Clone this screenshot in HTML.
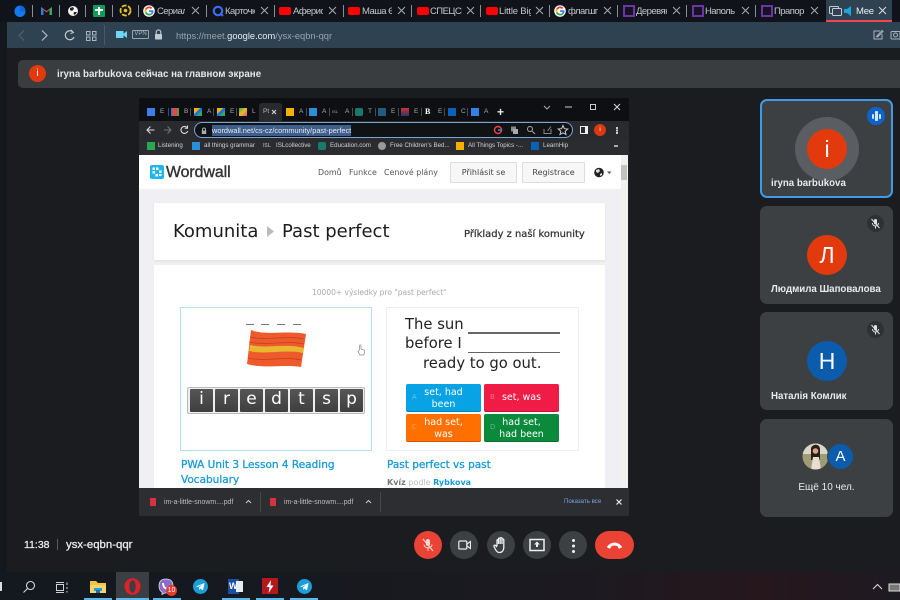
<!DOCTYPE html>
<html><head><meta charset="utf-8">
<style>
*{box-sizing:border-box}
html,body{margin:0;padding:0}
body{width:900px;height:600px;overflow:hidden;position:relative;background:#1a1c20;font-family:"Liberation Sans","Noto Sans CJK SC",sans-serif;color:#fff;filter:blur(.3px)}
.a{position:absolute;white-space:nowrap}
.sep{position:absolute;top:5px;width:1px;height:12px;background:#8a8d92}
.tt{position:absolute;top:4.500px;font-size:9.500px;letter-spacing:-.55px;line-height:13px;color:#c4c7cc;white-space:nowrap;overflow:hidden}
.x{position:absolute;top:6px;width:9px;height:9px}
.tile{position:absolute;left:760px;width:133px;background:#3c4043;border-radius:7px}
.av{position:absolute;width:40px;height:40px;border-radius:50%;color:#fff;text-align:center;font-size:23px;line-height:40px}
.nm{position:absolute;left:771px;font-size:9.700px;line-height:14px;font-weight:bold;color:#e8eaed;white-space:nowrap}
.mut{position:absolute;left:867px;width:17px;height:17px;border-radius:50%;background:#2e3134}
.btn{position:absolute;top:531px;width:28px;height:28px;border-radius:50%;background:#3c4043}
.bt{position:absolute;top:105px;height:16px}
.bt i{position:absolute;left:0;top:3px;width:8px;height:8px;display:block}
.bt b{position:absolute;left:13px;top:3px;font:normal 6.500px/8px "Liberation Sans",sans-serif;color:#aaa}
.ts{position:absolute;top:108px;width:1px;height:8px;background:#4a4c50}
.bm{position:absolute;top:140px;font-size:6.200px;line-height:12px;color:#d0d2d4;white-space:nowrap}
.bi{position:absolute;top:142px;width:8px;height:8px}
.lt{position:absolute;top:389px;width:23px;height:23px;background:linear-gradient(#555,#3f3f3f);color:#fff;font-size:17px;line-height:21px;text-align:center;font-family:"DejaVu Sans",sans-serif;border-radius:1px}
.ans{position:absolute;width:75px;height:28px;border-radius:2px;color:#fff;font-size:9.500px;line-height:11.500px;text-align:center;padding-top:3px;font-family:"DejaVu Sans",sans-serif;box-shadow:inset 0 -1px rgba(0,0,0,.2)}
.ans u{position:absolute;left:6px;top:8px;text-decoration:none;font-size:7px;line-height:11px;opacity:.35}
.tb{position:absolute;top:598px;width:28px;height:2px;background:#5fb6e8}
.ln{font:10.500px/15px "DejaVu Sans",sans-serif;color:#1a9ad8;-webkit-text-stroke:.3px #1a9ad8}
.big{font:14.800px/19.500px "DejaVu Sans",sans-serif;color:#222}
</style></head><body>

<!-- top tab strip -->
<div class="a" style="left:0;top:0;width:900px;height:22px;background:#10131a"></div>
<svg class="a" style="left:14px;top:5px" width="12" height="12"><circle cx="6" cy="6" r="5.500" fill="#0a66e0"/><path d="M.5 6.500A5.500 5.500 0 0 0 11.500 6.500L6 6.500 6 1A5.500 5.500 0 0 0 .5 6.500Z" fill="#1479ea"/></svg>
<div class="sep" style="left:32px"></div>
<svg class="a" style="left:41px;top:6px" width="11" height="10"><path d="M0 1V9H2.500V4L5.500 6.500 8.500 4V9H11V1L5.500 5Z" fill="#e8483a"/><path d="M0 1 2.500 3V9H0Z" fill="#2a7ce0"/><path d="M11 1 8.500 3V9H11Z" fill="#2fae5b"/></svg>
<div class="sep" style="left:59px"></div>
<svg class="a" style="left:67px;top:5px" width="12" height="12"><circle cx="6" cy="6" r="5" fill="#f2f2f2"/><path d="M3 3 6 2 7 4 5 6 3 5ZM7 7 10 7 8 10 6.500 9Z" fill="#222"/></svg>
<div class="sep" style="left:85px"></div>
<div class="a" style="left:93px;top:5px;width:12px;height:12px;background:#0f9d58;border-radius:1px"></div>
<div class="a" style="left:98px;top:7px;width:1.500px;height:8px;background:#fff"></div>
<div class="a" style="left:95px;top:9px;width:8px;height:1.500px;background:#fff"></div>
<div class="sep" style="left:112px"></div>
<svg class="a" style="left:119px;top:4px" width="13" height="13"><circle cx="6.500" cy="6.500" r="5" fill="none" stroke="#e8c020" stroke-width="1.800" stroke-dasharray="5 1.500"/><circle cx="6.500" cy="6.500" r="1.800" fill="#e8c020"/></svg>
<div class="sep" style="left:138px"></div>

<svg class="a" style="left:143px;top:5px" width="12" height="12"><circle cx="6" cy="6" r="5.800" fill="#fff"/><path d="M6 3.200A2.800 2.800 0 0 1 8 4L9.300 2.700A4.600 4.600 0 0 0 2 4L3.500 5A2.800 2.800 0 0 1 6 3.200Z" fill="#ea4335"/><path d="M2 4A4.600 4.600 0 0 0 2 8L3.500 7A2.800 2.800 0 0 1 3.500 5Z" fill="#fbbc05"/><path d="M2 8A4.600 4.600 0 0 0 9.200 9.300L7.800 8.200A2.800 2.800 0 0 1 3.500 7Z" fill="#34a853"/><path d="M10.500 5.200H6V7H8.600A2.500 2.500 0 0 1 7.800 8.200L9.200 9.300A4.600 4.600 0 0 0 10.500 5.200Z" fill="#4285f4"/></svg>
<div class="tt" style="left:157px;width:28px">Сериал</div>
<svg class="x" style="left:191px"><path d="M1 1 8 8M8 1 1 8" stroke="#aaa" fill="none"/></svg>
<div class="sep" style="left:206px"></div>
<svg class="a" style="left:212px;top:5px" width="12" height="12"><circle cx="6" cy="6" r="4.200" fill="none" stroke="#3b6cf0" stroke-width="2.200"/><path d="M8 8 11 11" stroke="#3b6cf0" stroke-width="2"/></svg>
<div class="tt" style="left:225px;width:30px">Карточк</div>
<svg class="x" style="left:260px"><path d="M1 1 8 8M8 1 1 8" stroke="#aaa" fill="none"/></svg>
<div class="sep" style="left:274px"></div>
<div class="a" style="left:279px;top:7px;width:12px;height:8px;background:#f00;border-radius:2px"></div>
<div class="tt" style="left:293px;width:30px">Аферист</div>
<svg class="x" style="left:328px"><path d="M1 1 8 8M8 1 1 8" stroke="#aaa" fill="none"/></svg>
<div class="sep" style="left:343px"></div>
<div class="a" style="left:348px;top:7px;width:12px;height:8px;background:#f00;border-radius:2px"></div>
<div class="tt" style="left:362px;width:30px">Маша Є</div>
<svg class="x" style="left:397px"><path d="M1 1 8 8M8 1 1 8" stroke="#aaa" fill="none"/></svg>
<div class="sep" style="left:411px"></div>
<div class="a" style="left:417px;top:7px;width:12px;height:8px;background:#f00;border-radius:2px"></div>
<div class="tt" style="left:430px;width:32px">СПЕЦСЕ</div>
<svg class="x" style="left:466px"><path d="M1 1 8 8M8 1 1 8" stroke="#aaa" fill="none"/></svg>
<div class="sep" style="left:480px"></div>
<div class="a" style="left:486px;top:7px;width:12px;height:8px;background:#f00;border-radius:2px"></div>
<div class="tt" style="left:499px;width:32px;letter-spacing:-.2px">Little Big</div>
<svg class="x" style="left:535px"><path d="M1 1 8 8M8 1 1 8" stroke="#aaa" fill="none"/></svg>
<div class="sep" style="left:549px"></div>
<svg class="a" style="left:554px;top:5px" width="12" height="12"><circle cx="6" cy="6" r="5.800" fill="#fff"/><path d="M6 3.200A2.800 2.800 0 0 1 8 4L9.300 2.700A4.600 4.600 0 0 0 2 4L3.500 5A2.800 2.800 0 0 1 6 3.200Z" fill="#ea4335"/><path d="M2 4A4.600 4.600 0 0 0 2 8L3.500 7A2.800 2.800 0 0 1 3.500 5Z" fill="#fbbc05"/><path d="M2 8A4.600 4.600 0 0 0 9.200 9.300L7.800 8.200A2.800 2.800 0 0 1 3.500 7Z" fill="#34a853"/><path d="M10.500 5.200H6V7H8.600A2.500 2.500 0 0 1 7.800 8.200L9.200 9.300A4.600 4.600 0 0 0 10.500 5.200Z" fill="#4285f4"/></svg>
<div class="tt" style="left:568px;width:30px">флагшп</div>
<svg class="x" style="left:603px"><path d="M1 1 8 8M8 1 1 8" stroke="#aaa" fill="none"/></svg>
<div class="sep" style="left:617px"></div>
<div class="a" style="left:623px;top:5px;width:12px;height:12px;border:2.500px solid #6b35a5;background:#15131f"></div>
<div class="tt" style="left:636px;width:31px">Деревян</div>
<svg class="x" style="left:672px"><path d="M1 1 8 8M8 1 1 8" stroke="#aaa" fill="none"/></svg>
<div class="sep" style="left:686px"></div>
<div class="a" style="left:692px;top:5px;width:12px;height:12px;border:2.500px solid #6b35a5;background:#15131f"></div>
<div class="tt" style="left:705px;width:31px">Наполь</div>
<svg class="x" style="left:741px"><path d="M1 1 8 8M8 1 1 8" stroke="#aaa" fill="none"/></svg>
<div class="sep" style="left:755px"></div>
<div class="a" style="left:761px;top:5px;width:12px;height:12px;border:2.500px solid #6b35a5;background:#15131f"></div>
<div class="tt" style="left:774px;width:31px">Прапор</div>
<svg class="x" style="left:810px"><path d="M1 1 8 8M8 1 1 8" stroke="#aaa" fill="none"/></svg>
<div class="a" style="left:826px;top:0;width:66px;height:22px;background:#2f4251"></div>
<div class="a" style="left:826px;top:20px;width:66px;height:1.500px;background:#f0474b"></div>
<svg class="a" style="left:829px;top:6px" width="13" height="10"><rect x=".5" y=".5" width="9" height="7" rx="1" fill="none" stroke="#c8ccd0"/><rect x="3.500" y="2.500" width="9" height="7" rx="1" fill="#2f4251" stroke="#c8ccd0"/></svg>
<svg class="a" style="left:844px;top:6px" width="9" height="10"><path d="M0 3H3L7 0V10L3 7H0Z" fill="#1aa6e0"/></svg>
<div class="tt" style="left:856px;width:18px;color:#eee;letter-spacing:-.2px">Meet</div>
<svg class="x" style="left:878px"><path d="M1 1 8 8M8 1 1 8" stroke="#ddd" fill="none"/></svg>

<!-- address bar -->
<div class="a" style="left:7px;top:22px;width:893px;height:26px;background:#2f4251"></div>
<svg class="a" style="left:17px;top:29px" width="100" height="13" fill="none"><path d="M7 1.500 2 6.500 7 11.500" stroke="#50626f" stroke-width="1.200"/><path d="M25 1.500 30 6.500 25 11.500" stroke="#b5bec6" stroke-width="1.200"/><path d="M56 3A4.500 4.500 0 1 0 57 8" stroke="#c2c9cf" stroke-width="1.200"/><path d="M54 .8 56.500 3.500 53.500 4.500" stroke="#c2c9cf"/><g stroke="#aeb6bd"><rect x="69.500" y="2.500" width="3.500" height="3.500"/><rect x="75.500" y="2.500" width="3.500" height="3.500"/><rect x="69.500" y="8" width="3.500" height="3.500"/><rect x="75.500" y="8" width="3.500" height="3.500"/></g></svg>
<div class="a" style="left:104px;top:25px;width:1px;height:20px;background:#4a5b68"></div>
<svg class="a" style="left:116px;top:30px" width="11" height="9"><rect y="1" width="7.500" height="7" fill="#6fd6f5"/><path d="M7 4 11 1V8L7 5Z" fill="#6fd6f5"/></svg>
<div class="a" style="left:132px;top:30px;width:17px;height:9px;border:1px solid #9aa4ac;border-radius:1px;font-size:6px;line-height:7px;text-align:center;color:#a8b1b8">VPN</div>
<svg class="a" style="left:154px;top:29px" width="9" height="11"><path d="M2.200 5V3.200A2.300 2.300 0 0 1 6.800 3.200V5" fill="none" stroke="#c2c9cf" stroke-width="1.100"/><rect x="1" y="5" width="7" height="5.500" rx=".6" fill="#c2c9cf"/></svg>
<div class="a" style="left:176px;top:29.500px;font-size:9.300px;line-height:13px;color:#99a4ad">https://meet.<span style="color:#e8ecef">google.com</span>/ysx-eqbn-qqr</div>
<svg class="a" style="left:872px;top:29px" width="28" height="11" fill="none" stroke="#a9b2b9"><path d="M8 2H2V10H10V5"/><path d="M4.500 7.500 10 1.500 11 2.500 5.500 8Z"/><rect x="19" y="2.500" width="9" height="7.500" rx="1"/><circle cx="23.500" cy="6" r="2"/></svg>

<!-- left strip -->
<div class="a" style="left:0;top:22px;width:7px;height:550px;background:#14171c"></div>

<!-- banner -->
<div class="a" style="left:18px;top:60px;width:882px;height:28px;background:#3a3d40;border-radius:5px 0 0 5px"></div>
<div class="a" style="left:29px;top:65px;width:17px;height:17px;border-radius:50%;background:#e23a0c;font-size:10px;line-height:17px;text-align:center;color:#fff">i</div>
<div class="a" style="left:57px;top:67.500px;font-size:9.750px;line-height:14px;font-weight:bold;color:#e4e6e8">iryna barbukova сейчас на главном экране</div>

<!-- shared screen chrome -->
<div class="a" style="left:139px;top:98px;width:490px;height:418px;background:#202124;overflow:hidden"></div>
<div class="a" style="left:139px;top:98px;width:490px;height:23px;background:#0e0f12"></div>
<div class="a" style="left:259px;top:103px;width:23px;height:18px;background:#292a2d;border-radius:3px 3px 0 0"></div>
<div class="a" style="left:263px;top:108px;font-size:6.500px;line-height:8px;color:#bbb">Pt</div>
<svg class="a" style="left:271px;top:109px" width="6" height="6"><path d="M1 1 5 5M5 1 1 5" stroke="#ddd"/></svg>

<div class="bt" style="left:147px"><i style="background:#3a7ee8"></i><b>E</b></div>
<div class="ts" style="left:168px"></div>
<div class="bt" style="left:171px"><i style="background:linear-gradient(90deg,#2a7ce0 20%,#e8483a 20%,#e8483a 80%,#2fae5b 80%)"></i><b>B</b></div>
<div class="ts" style="left:190px"></div>
<div class="bt" style="left:194px"><i style="background:linear-gradient(135deg,#f4b400 40%,#1a73e8 40%,#1a73e8 65%,#34a853 65%)"></i><b>A</b></div>
<div class="ts" style="left:213px"></div>
<div class="bt" style="left:217px"><i style="background:linear-gradient(135deg,#f4b400 40%,#1a73e8 40%,#1a73e8 65%,#34a853 65%)"></i><b>E</b></div>
<div class="ts" style="left:236px"></div>
<div class="bt" style="left:239px"><i style="background:linear-gradient(135deg,#3ba55c,#e8c020 50%,#e84393)"></i><b>L</b></div>
<div class="bt" style="left:286px"><i style="background:#f4b000"></i><b>A</b></div>
<div class="ts" style="left:306px"></div>
<div class="bt" style="left:309px"><i style="background:#2a8fd8"></i><b>A</b></div>
<div class="ts" style="left:329px"></div>
<div class="bt" style="left:332px"><i style="background:#111;font:normal 4px/8px 'Liberation Sans';color:#aaa">ISL</i><b>A</b></div>
<div class="ts" style="left:352px"></div>
<div class="bt" style="left:355px"><i style="background:#177a6c;border-radius:2px"></i><b>T</b></div>
<div class="ts" style="left:375px"></div>
<div class="bt" style="left:378px"><i style="background:#1f5c7e"></i><b>E</b></div>
<div class="ts" style="left:398px"></div>
<div class="bt" style="left:401px"><i style="background:linear-gradient(#c33,#336)"></i><b>E</b></div>
<div class="ts" style="left:421px"></div>
<div class="bt" style="left:425px"><i style="background:#111;color:#fff;font:bold 8px/8px 'Liberation Serif'">B</i><b>E</b></div>
<div class="ts" style="left:444px"></div>
<div class="bt" style="left:448px"><i style="background:#0b62b5"></i><b>C</b></div>
<div class="ts" style="left:467px"></div>
<div class="bt" style="left:471px"><i style="background:#3a7ee8"></i><b>A</b></div>
<div class="a" style="left:497px;top:105px;font-size:12px;line-height:14px;font-weight:bold;color:#e8e8e8">+</div>
<svg class="a" style="left:541px;top:102px" width="82" height="11" fill="none" stroke="#aaa"><path d="M3 4 6 7 9 4"/><path d="M24 5H31" stroke="#ccc"/><rect x="49.500" y="2.500" width="5" height="5" stroke="#ccc"/><path d="M73 2 79 8M79 2 73 8" stroke="#ddd"/></svg>

<!-- chrome url -->
<div class="a" style="left:139px;top:121px;width:490px;height:20px;background:#292a2d"></div>
<svg class="a" style="left:146px;top:124px" width="46" height="12" fill="none"><path d="M1.500 6H8.500M4.500 2.500 1 6 4.500 9.500" stroke="#ddd" stroke-width="1.100"/><path d="M18 6H25M21.500 2.500 25 6 21.500 9.500" stroke="#707276" stroke-width="1.100"/><path d="M41 3.500A3.500 3.500 0 1 0 41.800 7" stroke="#ddd" stroke-width="1.100"/><path d="M41.500 1.500V4.200H38.800" stroke="#ddd"/></svg>
<div class="a" style="left:194px;top:122px;width:379px;height:16px;border:1.200px solid #7aa3d8;border-radius:8px;background:#111214"></div>
<svg class="a" style="left:201px;top:127px" width="6" height="8"><path d="M1.500 3.500V2.500A1.500 1.500 0 0 1 4.500 2.500V3.500" stroke="#aaa" fill="none"/><rect x=".8" y="3.500" width="4.400" height="3.500" fill="#aaa"/></svg>
<div class="a" style="left:212px;top:125px;width:139px;height:10.500px;background:#3e5e8c"></div>
<div class="a" style="left:212px;top:124.500px;font-size:7.400px;line-height:11px;color:#e8eaed">wordwall.net/cs-cz/community/past-perfect</div>
<svg class="a" style="left:493px;top:124px" width="78" height="12"><circle cx="5" cy="6" r="3.500" fill="none" stroke="#ea4335" stroke-width="1.500"/><path d="M5 6H8.500" stroke="#4285f4" stroke-width="1.500"/><rect x="18" y="2.500" width="5" height="5" fill="#888"/><rect x="20" y="5" width="5" height="5" fill="#aaa"/><circle cx="37" cy="5" r="2.500" fill="none" stroke="#aaa"/><path d="M39 7 42 10" stroke="#aaa"/><path d="M51 5V9.500H58V5M54.500 7 58 2.500" fill="none" stroke="#888"/><path d="M70 1.500 71.400 4.700 74.800 5 72.200 7.300 73 10.500 70 8.800 67 10.500 67.800 7.300 65.200 5 68.600 4.700Z" fill="none" stroke="#ccc"/></svg>
<div class="a" style="left:580px;top:126px;width:8px;height:8px;border:1px solid #eee;border-right-width:3px"></div>
<div class="a" style="left:594px;top:124px;width:12px;height:12px;border-radius:50%;background:#d93a10;font-size:6px;line-height:12px;text-align:center">i</div>
<div class="a" style="left:616px;top:127px;width:2px;height:2px;background:#ccc;box-shadow:0 2.500px #ccc,0 5px #ccc"></div>

<!-- bookmarks -->
<div class="a" style="left:139px;top:141px;width:490px;height:14px;background:#2a2c2f"></div>
<div class="bi" style="left:147px;background:#2aa84f"></div><div class="bm" style="left:158px">Listening</div>
<div class="bi" style="left:192px;background:#2a8fd8"></div><div class="bm" style="left:204px">all things grammar</div>
<div class="a" style="left:263px;top:140px;font-size:5px;line-height:12px;color:#999;font-weight:bold">ISL</div><div class="bm" style="left:276px">ISLcollective</div>
<div class="bi" style="left:318px;background:#177a6c;border-radius:2px"></div><div class="bm" style="left:330px">Education.com</div>
<div class="bi" style="left:378px;background:#999;border-radius:50%"></div><div class="bm" style="left:390px">Free Children's Bed...</div>
<div class="bi" style="left:456px;background:#f4b000"></div><div class="bm" style="left:468px">All Things Topics -...</div>
<div class="bi" style="left:531px;background:#0b62b5"></div><div class="bm" style="left:543px">LearnHip</div>
<div class="a" style="left:614px;top:145px;width:4px;height:2px;background:#aaa"></div>

<!-- page -->
<div class="a" style="left:139px;top:155px;width:482px;height:333px;background:#f0f0f4"></div>
<div class="a" style="left:139px;top:155px;width:482px;height:34px;background:#fff"></div>
<div class="a" style="left:621px;top:155px;width:7px;height:333px;background:#f1f1f1"></div>
<div class="a" style="left:621px;top:165px;width:6px;height:15px;background:#c1c1c1"></div>

<svg class="a" style="left:150px;top:165px" width="14" height="14"><rect width="14" height="14" rx="2" fill="#1fb6ee"/><g fill="#fff"><rect x="2.500" y="2.500" width="2.500" height="2.500"/><rect x="6" y="2.500" width="2.500" height="2.500"/><rect x="9" y="5.500" width="2.500" height="2.500"/><rect x="2.500" y="6" width="2.500" height="2.500"/><rect x="5.500" y="9" width="2.500" height="2.500"/><rect x="9" y="9" width="2.500" height="2"/></g></svg>
<div class="a" style="left:166px;top:163.500px;font-size:15.800px;line-height:18px;color:#333;-webkit-text-stroke:.4px #333">Wordwall</div>
<div class="a" style="left:318px;top:167px;font:7.900px/12px 'DejaVu Sans',sans-serif;color:#555">Domů</div>
<div class="a" style="left:349px;top:167px;font:7.900px/12px 'DejaVu Sans',sans-serif;color:#555">Funkce</div>
<div class="a" style="left:384px;top:167px;font:7.900px/12px 'DejaVu Sans',sans-serif;color:#555">Cenové plány</div>
<div class="a" style="left:450px;top:162px;width:67px;height:21px;background:#f7f7f7;border:1px solid #ddd;border-radius:1px;font:8px/19px 'DejaVu Sans',sans-serif;color:#444;text-align:center">Přihlásit se</div>
<div class="a" style="left:522px;top:162px;width:63px;height:21px;background:#f7f7f7;border:1px solid #ddd;border-radius:1px;font:8px/19px 'DejaVu Sans',sans-serif;color:#444;text-align:center">Registrace</div>
<svg class="a" style="left:594px;top:167px" width="20" height="11"><circle cx="5" cy="5.500" r="4.800" fill="#222"/><path d="M2 3 5 2 6 4 4 6 2 5ZM6 7 8 6 8 8 6 9Z" fill="#ddd"/><path d="M13 4.500H17.500L15.250 7Z" fill="#555"/></svg>

<div class="a" style="left:154px;top:203px;width:451px;height:57px;background:#fff;box-shadow:0 1px 2px #ddd"></div>
<div class="a" style="left:173px;top:220px;font:18px/24px 'DejaVu Sans',sans-serif;color:#1c1c1c">Komunita</div>
<svg class="a" style="left:267px;top:226px" width="7" height="11"><path d="M0 0 7 5.500 0 11Z" fill="#bbb"/></svg>
<div class="a" style="left:282px;top:220px;font:18px/24px 'DejaVu Sans',sans-serif;color:#1c1c1c">Past perfect</div>
<div class="a" style="left:464px;top:228px;font:9.950px/14px 'DejaVu Sans',sans-serif;color:#333;-webkit-text-stroke:.25px #333">Příklady z naší komunity</div>

<div class="a" style="left:154px;top:265px;width:451px;height:223px;background:#fff"></div>
<div class="a" style="left:312px;top:287px;font:7.500px/12px 'DejaVu Sans',sans-serif;color:#aaa">10000+ výsledky pro "past perfect"</div>

<!-- card A -->
<div class="a" style="left:180px;top:307px;width:192px;height:144px;background:#fff;border:1px solid #b5e0f2"></div>
<div class="a" style="left:246px;top:324px;width:8px;height:1px;background:#777;box-shadow:15px 0 #777,31px 0 #777,47px 0 #777"></div>
<svg class="a" style="left:246px;top:328px" width="62" height="42"><path d="M5 2C20 8 42 2 60 6L55 39C38 36 18 41 1 36Z" fill="#ee5a2c"/><path d="M4 17C20 21 40 15 58 20L57 25C40 21 20 27 3 23Z" fill="#e8b830"/><path d="M4 9C20 13 40 7 58 11M3 14C20 18 40 12 58 16M2 30C20 34 38 28 55 32" stroke="#c8401e" fill="none" stroke-width=".8"/></svg>
<div class="a" style="left:187px;top:387px;width:178px;height:27px;background:#eee;border:1px solid #bbb;border-radius:2px"></div>
<div class="lt" style="left:190px">i</div><div class="lt" style="left:215px">r</div><div class="lt" style="left:240px">e</div><div class="lt" style="left:265px">d</div><div class="lt" style="left:290px">t</div><div class="lt" style="left:315px">s</div><div class="lt" style="left:340px">p</div>
<svg class="a" style="left:357px;top:344px" width="9" height="12"><path d="M2.500 6V1.800C2.500 .6 4 .6 4 1.800V5L7.500 6.200V9.500L6.500 11H3L1 7.500Z" fill="#fff" stroke="#888" stroke-width=".7"/></svg>

<!-- card B -->
<div class="a" style="left:386px;top:307px;width:193px;height:144px;background:#fff;border:1px solid #eee"></div>
<div class="a big" style="left:405px;top:314.500px">The sun</div>
<div class="a" style="left:468px;top:332px;width:92px;height:1.500px;background:#666"></div>
<div class="a big" style="left:405px;top:333.500px">before I</div>
<div class="a" style="left:468px;top:351.500px;width:92px;height:1.500px;background:#666"></div>
<div class="a big" style="left:423px;top:353.500px">ready to go out.</div>
<div class="ans" style="left:406px;top:384px;background:#07a3e4"><u>A</u>set, had<br>been</div>
<div class="ans" style="left:484px;top:384px;background:#f01c46;padding-top:8px"><u>B</u>set, was</div>
<div class="ans" style="left:406px;top:414px;background:#ff7000"><u>C</u>had set,<br>was</div>
<div class="ans" style="left:484px;top:414px;background:#0b8a3c"><u>D</u>had set,<br>had been</div>

<div class="a ln" style="left:181px;top:458px">PWA Unit 3 Lesson 4 Reading</div>
<div class="a ln" style="left:181px;top:473px">Vocabulary</div>
<div class="a ln" style="left:387px;top:458px">Past perfect vs past</div>
<div class="a" style="left:387px;top:477px;font:8px/12px 'DejaVu Sans',sans-serif;color:#777"><span style="font-weight:bold">Kvíz</span> <span style="color:#bbb">podle</span> <span style="color:#1a9ad8;font-weight:bold">Rybkova</span></div>

<!-- download bar -->
<div class="a" style="left:139px;top:488px;width:490px;height:28px;background:#2c2e31"></div>
<div class="a" style="left:150px;top:498px;width:6px;height:8px;background:#d8333c"></div>
<div class="a" style="left:164px;top:497.500px;font-size:6.900px;line-height:10px;color:#bcbfc2">im-a-little-snowm....pdf</div>
<svg class="a" style="left:245px;top:499px" width="7" height="5"><path d="M1 4 3.500 1.500 6 4" stroke="#ccc" fill="none"/></svg>
<div class="a" style="left:260px;top:492px;width:1px;height:20px;background:#45474a"></div>
<div class="a" style="left:270px;top:498px;width:6px;height:8px;background:#d8333c"></div>
<div class="a" style="left:284px;top:497.500px;font-size:6.900px;line-height:10px;color:#bcbfc2">im-a-little-snowm....pdf</div>
<svg class="a" style="left:365px;top:499px" width="7" height="5"><path d="M1 4 3.500 1.500 6 4" stroke="#ccc" fill="none"/></svg>
<div class="a" style="left:380px;top:492px;width:1px;height:20px;background:#45474a"></div>
<div class="a" style="left:564px;top:497px;font-size:6.100px;line-height:10px;color:#7ba4e0">Показать все</div>
<svg class="a" style="left:615px;top:498px" width="8" height="8"><path d="M1.500 1.500 6.500 6.500M6.500 1.500 1.500 6.500" stroke="#eee" stroke-width="1.200"/></svg>

<!-- right tiles -->
<div class="tile" style="top:99px;height:99px;border:2px solid #3f9be8"></div>
<div class="a" style="left:795px;top:116.500px;width:64px;height:64px;border-radius:50%;background:#5a5e62"></div>
<div class="av" style="left:807px;top:128.500px;background:#e23a0c">i</div>
<div class="nm" style="top:177px">iryna barbukova</div>
<div class="a" style="left:867px;top:107px;width:18px;height:18px;border-radius:50%;background:#0b63cf"></div>
<div class="a" style="left:871.500px;top:113.500px;width:2px;height:5px;background:#d8e8fb;border-radius:1px"></div>
<div class="a" style="left:875px;top:111px;width:2.500px;height:10px;background:#d8e8fb;border-radius:1px"></div>
<div class="a" style="left:879px;top:113.500px;width:2px;height:5px;background:#d8e8fb;border-radius:1px"></div>

<div class="tile" style="top:206px;height:98px"></div>
<div class="av" style="left:807px;top:235px;background:#e23a0c">Л</div>
<div class="nm" style="top:283px">Людмила Шаповалова</div>
<div class="mut" style="top:215px"></div>
<svg class="a" style="left:870px;top:218px" width="11" height="11" fill="none" stroke="#dfe1e3"><rect x="4" y="1" width="3" height="5.500" rx="1.500" fill="#dfe1e3" stroke="none"/><path d="M2.500 5C2.500 9 8.500 9 8.500 5M5.500 8V10.500"/><path d="M1.500 1 9.500 10"/></svg>

<div class="tile" style="top:312px;height:98px"></div>
<div class="av" style="left:807px;top:341px;background:#0b5cad">Н</div>
<div class="nm" style="top:390px">Наталія Комлик</div>
<div class="mut" style="top:321px"></div>
<svg class="a" style="left:870px;top:324px" width="11" height="11" fill="none" stroke="#dfe1e3"><rect x="4" y="1" width="3" height="5.500" rx="1.500" fill="#dfe1e3" stroke="none"/><path d="M2.500 5C2.500 9 8.500 9 8.500 5M5.500 8V10.500"/><path d="M1.500 1 9.500 10"/></svg>

<div class="tile" style="top:419px;height:98px"></div>
<svg class="a" style="left:802px;top:443px" width="27" height="27"><defs><clipPath id="c"><circle cx="13.500" cy="13.500" r="13"/></clipPath></defs><g clip-path="url(#c)"><rect width="27" height="27" fill="#9f9a78"/><rect width="27" height="11" fill="#d8d8c8"/><path d="M9 5C11 0 18 1 18 6V17H9Z" fill="#2b1d18"/><path d="M9 27 11 14 17 14 19 27Z" fill="#e8ded0"/><circle cx="13.500" cy="8" r="2.800" fill="#d4a68c"/></g></svg>
<div class="a" style="left:827px;top:443px;width:27px;height:27px;border-radius:50%;background:#0b5cad;border:1px solid #3c4043;font-size:15px;line-height:25px;text-align:center">A</div>
<div class="a" style="left:760px;top:480.500px;width:133px;text-align:center;font-size:10px;line-height:14px;color:#e8eaed">Ещё 10 чел.</div>

<!-- bottom bar -->
<div class="a" style="left:24px;top:538px;font-size:10.500px;line-height:14px;color:#e8eaed;-webkit-text-stroke:.3px #e8eaed">11:38</div>
<div class="a" style="left:57px;top:539px;width:1px;height:11px;background:#5a5e62"></div>
<div class="a" style="left:66px;top:538px;font-size:11.400px;line-height:14px;color:#e8eaed;-webkit-text-stroke:.3px #e8eaed">ysx-eqbn-qqr</div>

<div class="btn" style="left:414px;background:#ea4335"></div>
<svg class="a" style="left:421px;top:538px" width="14" height="14" fill="none" stroke="#f5d6d2"><rect x="5" y="1" width="4" height="7" rx="2" fill="#f5d6d2" stroke="none"/><path d="M3 6.500C3 11 11 11 11 6.500M7 10V13"/><path d="M2 1 12 13" stroke-width="1.200"/></svg>
<div class="btn" style="left:450px"></div>
<svg class="a" style="left:458px;top:539px" width="13" height="12" fill="none" stroke="#e8eaed" stroke-width="1.200"><rect x=".8" y="2" width="8" height="8" rx="1"/><path d="M9 5 12.500 2.500V9.500L9 7Z"/></svg>
<div class="btn" style="left:487px"></div>
<svg class="a" style="left:493px;top:536px" width="16" height="18" fill="none" stroke="#f0f0f0" stroke-width="1.300"><path d="M4 10V4.500C4 3.400 5.500 3.400 5.500 4.500V8M5.500 8V2.800C5.500 1.700 7.200 1.700 7.200 2.800V8M7.200 8V2.500C7.200 1.400 9 1.400 9 2.500V8M9 8V3.800C9 2.700 10.800 2.700 10.800 3.800V11C10.800 14.500 9 16.500 6.500 16.500 4.500 16.500 3.500 15.500 2.500 13.500L1 10.500C.6 9.300 2 8.700 2.800 9.700L4 11"/></svg>
<div class="btn" style="left:523px"></div>
<svg class="a" style="left:529px;top:538px" width="16" height="14"><rect x="1" y="1.500" width="14" height="11" fill="none" stroke="#f0f0f0" stroke-width="1.500"/><path d="M8 3.500 11 6.500H9V9H7V6.500H5Z" fill="#f0f0f0"/></svg>
<div class="btn" style="left:559px"></div>
<div class="a" style="left:571.500px;top:538.500px;width:3px;height:3px;border-radius:50%;background:#f0f0f0;box-shadow:0 5.500px #f0f0f0,0 11px #f0f0f0"></div>
<div class="btn" style="left:595px;width:39px;border-radius:14px;background:#ea4335"></div>
<svg class="a" style="left:606px;top:541px" width="17" height="8"><path d="M1 6C5 .5 12 .5 16 6L13 7.500 11.500 4.800C10 4.200 7 4.200 5.500 4.800L4 7.500Z" fill="#fff" stroke="#fff" stroke-width=".5"/></svg>

<!-- taskbar -->
<div class="a" style="left:0;top:572px;width:900px;height:28px;background:linear-gradient(90deg,#14191f 0,#16191f 35%,#1c1a20 65%,#26171d 85%,#1e1a22 100%)"></div>
<div class="a" style="left:0;top:582px;width:2px;height:9px;background:#ddd"></div>
<svg class="a" style="left:22px;top:580px" width="14" height="14" fill="none" stroke="#d8d8d8" stroke-width="1.100"><circle cx="8.500" cy="5.500" r="4"/><path d="M5.500 8.500 1.500 12.500"/></svg>
<svg class="a" style="left:55px;top:582px" width="14" height="11" fill="none" stroke="#d0d0d0"><rect x="1.500" y="2.500" width="7" height="6"/><path d="M1 .5H9M1 10.500H9M12 .5V3M12 5V7M12 9V10.500"/></svg>
<svg class="a" style="left:90px;top:579px" width="16" height="15"><path d="M0 2H6L8 4H16V14H0Z" fill="#f3c343"/><rect x="0" y="6" width="16" height="8" fill="#f5d56a"/><rect x="4" y="9" width="8" height="3" fill="#2a9ad8"/><rect x="6" y="11" width="4" height="3" fill="#1a70b0"/></svg>
<div class="a" style="left:116px;top:572px;width:33px;height:28px;background:#3b3e42"></div>
<svg class="a" style="left:124px;top:578px" width="17" height="17"><ellipse cx="8.500" cy="8.500" rx="8" ry="8.300" fill="#e0202a"/><ellipse cx="8.500" cy="8.500" rx="3.200" ry="6.200" fill="#3b3e42"/></svg>
<svg class="a" style="left:158px;top:578px" width="18" height="18"><path d="M8 1C3 1 1 4 1 8C1 11 2 13 4 14V16.500L6.500 15H8C13 15 15 12 15 8C15 4 13 1 8 1Z" fill="#8a6ccf" stroke="#ddd" stroke-width=".8"/><path d="M5 5C5 9 7 11 11 11" stroke="#fff" stroke-width="1.800" fill="none"/></svg>
<div class="a" style="left:166px;top:584.500px;width:11px;height:11px;border-radius:50%;background:#e53a30;font-size:7px;line-height:11px;text-align:center">10</div>
<svg class="a" style="left:193px;top:579px" width="15" height="15"><circle cx="7.500" cy="7.500" r="7.500" fill="#199ed8"/><path d="M3 7.500 11.500 4 10 11.500 7.500 9.500 6.500 11 6 8.500 9.500 5.500 5 8Z" fill="#fff"/></svg>
<div class="a" style="left:228px;top:579px;width:11px;height:15px;background:#1b4f9f"></div>
<div class="a" style="left:236px;top:581px;width:7px;height:11px;background:#e4ecf6"></div>
<div class="a" style="left:229px;top:581px;font-size:9px;line-height:11px;font-weight:bold">W</div>
<div class="a" style="left:262px;top:578px;width:16px;height:16px;background:#b3181c"></div>
<svg class="a" style="left:265px;top:580px" width="10" height="13"><path d="M6 0 1.500 7H4.500L3.500 13 8.500 5.500H5.500Z" fill="#fff"/></svg>
<svg class="a" style="left:297px;top:579px" width="15" height="15"><circle cx="7.500" cy="7.500" r="7.500" fill="#199ed8"/><path d="M3 7.500 11.500 4 10 11.500 7.500 9.500 6.500 11 6 8.500 9.500 5.500 5 8Z" fill="#fff"/></svg>
<div class="tb" style="left:84px"></div><div class="tb" style="left:116px;width:33px"></div><div class="tb" style="left:153px"></div><div class="tb" style="left:222px"></div><div class="tb" style="left:256px"></div><div class="tb" style="left:290px"></div>
<svg class="a" style="left:872px;top:581px" width="28" height="14" fill="none"><path d="M1 8 5.500 3.500 10 8" stroke="#d8d8d8" stroke-width="1.100"/><rect x="17" y="3" width="11" height="7" fill="#777" stroke="#ddd"/></svg>
</body></html>
